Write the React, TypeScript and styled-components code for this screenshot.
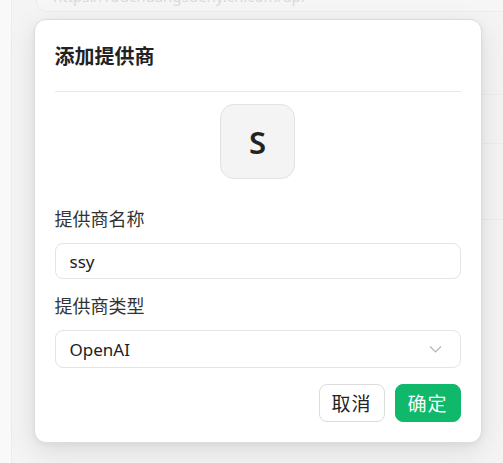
import React from "react";
import styled, { createGlobalStyle } from "styled-components";

const GlobalStyle = createGlobalStyle`
  html, body {
    margin: 0;
    padding: 0;
    width: 100%;
    height: 100%;
    overflow: hidden;
  }
  body {
    font-family: "Noto Sans", "Noto Sans CJK SC", sans-serif;
    color: #222;
    background: #f7f7f7;
  }
  * { box-sizing: border-box; }
`;

const Page = styled.div`
  display: flex;
  width: 503px;
  height: 463px;
  background: #f7f7f7;
`;

const Sidebar = styled.aside`
  width: 12px;
  flex-shrink: 0;
  background: #f9f9f9;
  border-right: 1px solid #ececec;
`;

const Main = styled.main`
  position: relative;
  flex: 1;
  display: flex;
  flex-direction: column;
  padding-left: 24px;
  background: #f6f6f6;
`;

const UrlCard = styled.div`
  height: 25px;
  margin-top: -13px;
  margin-right: -20px;
  padding: 0 16px;
  background: #f9f9f9;
  border: 1px solid #ebebeb;
  border-radius: 10px;
  font-size: 15px;
  line-height: 16px;
  color: #cdcdcd;
  overflow: hidden;
  white-space: nowrap;
`;

const ListRow = styled.div<{ $h: number }>`
  height: ${(p) => p.$h}px;
  border-bottom: 1px solid #ececec;
`;

const Overlay = styled.div`
  position: absolute;
  inset: 0;
  display: flex;
  align-items: center;
  justify-content: center;
  background: rgba(240, 240, 240, 0.35);
`;

const Dialog = styled.div`
  width: 448px;
  display: flex;
  flex-direction: column;
  padding: 0 20px 20px;
  margin-top: -1px;
  background: #fff;
  border: 1px solid #dcdcdc;
  border-radius: 12px;
  box-shadow: 0 8px 28px rgba(0, 0, 0, 0.1), 0 2px 6px rgba(0, 0, 0, 0.05);
`;

const Header = styled.div`
  padding: 22px 0 20px;
  border-bottom: 1px solid #e8e8e8;
`;

const Title = styled.h2`
  margin: 0;
  font-size: 20px;
  line-height: 29px;
  font-weight: 700;
  color: #222;
`;

const AvatarWrap = styled.div`
  display: flex;
  justify-content: center;
  padding: 12px 0 28px;
`;

const Avatar = styled.div`
  width: 75px;
  height: 75px;
  display: flex;
  align-items: center;
  justify-content: center;
  background: #f4f4f4;
  border: 1px solid #e2e2e2;
  border-radius: 14px;
  font-size: 31px;
  font-weight: 600;
  color: #222;
`;

const Field = styled.div`
  display: flex;
  flex-direction: column;
  gap: 12px;
  & + & {
    margin-top: 15px;
  }
`;

const Label = styled.label`
  font-size: 18px;
  line-height: 24px;
  color: #333;
`;

const TextInput = styled.input`
  height: 36px;
  width: 100%;
  padding: 0 14px;
  border: 1px solid #e4e4e4;
  border-radius: 8px;
  font-family: inherit;
  font-size: 17px;
  color: #222;
  background: #fff;
  outline: none;
`;

const SelectBox = styled.div`
  height: 38px;
  display: flex;
  align-items: center;
  justify-content: space-between;
  padding: 0 18px 0 14px;
  border: 1px solid #e4e4e4;
  border-radius: 8px;
  font-size: 17px;
  color: #222;
  background: #fff;
`;

const Actions = styled.div`
  display: flex;
  justify-content: flex-end;
  gap: 10px;
  margin-top: 16px;
`;

const Button = styled.button<{ $primary?: boolean }>`
  width: 66px;
  height: 38px;
  padding: 0;
  border-radius: 8px;
  font-family: inherit;
  font-size: 19px;
  letter-spacing: 1px;
  cursor: pointer;
  border: 1px solid ${(p) => (p.$primary ? "#0fb86b" : "#dcdcdc")};
  background: ${(p) => (p.$primary ? "#0fb86b" : "#fff")};
  color: ${(p) => (p.$primary ? "#fff" : "#222")};
`;

const Chevron = () => (
  <svg width="13" height="9" viewBox="0 0 13 9" fill="none">
    <path d="M1 1.5 L6.5 7 L12 1.5" stroke="#b5b5b5" strokeWidth="1.2" />
  </svg>
);

export default function App() {
  return (
    <>
      <GlobalStyle />
      <Page>
        <Sidebar />
        <Main>
          <UrlCard>https://rouchuangsdeny.cn.com/api</UrlCard>
          <ListRow $h={83} />
          <ListRow $h={49} />
          <ListRow $h={76} />
          <Overlay>
            <Dialog>
              <Header>
                <Title>添加提供商</Title>
              </Header>
              <AvatarWrap>
                <Avatar>S</Avatar>
              </AvatarWrap>
              <Field>
                <Label>提供商名称</Label>
                <TextInput defaultValue="ssy" />
              </Field>
              <Field>
                <Label>提供商类型</Label>
                <SelectBox>
                  <span>OpenAI</span>
                  <Chevron />
                </SelectBox>
              </Field>
              <Actions>
                <Button>取消</Button>
                <Button $primary>确定</Button>
              </Actions>
            </Dialog>
          </Overlay>
        </Main>
      </Page>
    </>
  );
}
